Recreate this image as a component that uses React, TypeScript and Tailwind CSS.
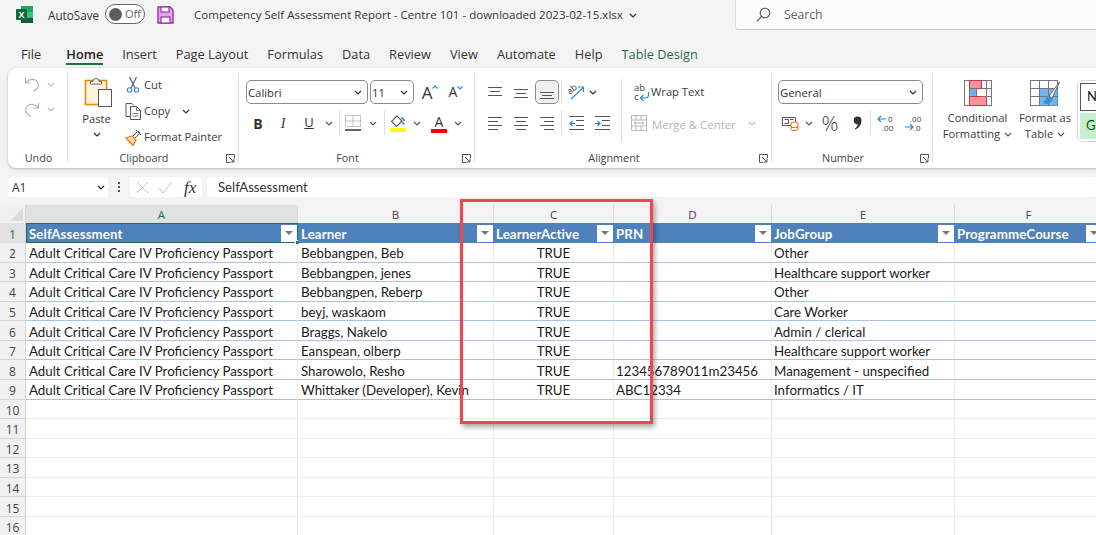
import type { ReactNode } from 'react'

const passport = 'Adult Critical Care IV Proficiency Passport'

const rows = [
    ['Bebbangpen, Beb', '', 'Other'],
    ['Bebbangpen, jenes', '', 'Healthcare support worker'],
    ['Bebbangpen, Reberp', '', 'Other'],
    ['beyj, waskaom', '', 'Care Worker'],
    ['Braggs, Nakelo', '', 'Admin / clerical'],
    ['Eanspean, olberp', '', 'Healthcare support worker'],
    ['Sharowolo, Resho', '123456789011m23456', 'Management - unspecified'],
    ['Whittaker (Developer), Kevin', 'ABC12334', 'Informatics / IT'],
]

const tabs = ['File', 'Home', 'Insert', 'Page Layout', 'Formulas', 'Data', 'Review', 'View', 'Automate', 'Help', 'Table Design']

const colWidths = ['w-[272px]', 'w-[196px]', 'w-[120px]', 'w-[158px]', 'w-[183px]', 'w-[148px]']
const colNames = ['A', 'B', 'C', 'D', 'E', 'F']
const headers = ['SelfAssessment', 'Learner', 'LearnerActive', 'PRN', 'JobGroup', 'ProgrammeCourse']
const headerPad = ['pl-[3px]', 'pl-[3px]', 'pl-[2px]', 'pl-[2px]', 'pl-[2px]', 'pl-[2px]']

const dataCell = 'flex shrink-0 items-center whitespace-nowrap border-b border-r border-b-[#a9c3e6] border-r-[#ececec] pt-[4px]'
const rowHead = "flex w-[26px] shrink-0 items-center justify-center border-r border-b border-[#d4d4d4] bg-[#f1f1f1] pt-[4px] font-['Open_Sans',sans-serif] text-[12px] text-[#444]"

function Chevron({ color = '#555' }: { color?: string }) {
    return (
        <svg width="8" height="5" viewBox="0 0 8 5" fill="none" stroke={color} strokeWidth="1.2" className="shrink-0">
            <path d="M1 1l3 3 3-3" />
        </svg>
    )
}

function Launcher() {
    return (
        <svg width="9" height="9" viewBox="0 0 9 9" fill="none" stroke="#555" strokeWidth="1" className="absolute right-[3px] top-[6px]">
            <path d="M8.5 4V.5H.5v8H4M3 3l5 5M8 4.5V8H4.5" />
        </svg>
    )
}

function Slot({ w, children }: { w: string; children?: ReactNode }) {
    return <div className={`flex h-6 shrink-0 items-center justify-center ${w}`}>{children}</div>
}

function Divider() {
    return <div className="h-6 w-px shrink-0 bg-[#dcdcdc]" />
}

function Separator() {
    return <div className="mt-[5px] h-[89px] w-px shrink-0 bg-[#e1e1e1]" />
}

function Group({ label, w, launcher = true, children }: { label: string; w: string; launcher?: boolean; children: ReactNode }) {
    return (
        <div className={`flex h-[100px] shrink-0 flex-col ${w}`}>
            <div className="h-[80px]">{children}</div>
            <div className={`relative flex h-[20px] items-center justify-center text-[10.800px] text-[#444] ${launcher ? 'pr-[18px]' : 'pl-[2px]'}`}>
                {label}
                {launcher && <Launcher />}
            </div>
        </div>
    )
}

function Combo({ w, text }: { w: string; text: string }) {
    return (
        <div className={`flex h-6 shrink-0 items-center justify-between rounded-[5px] border border-[#8a8a8a] bg-white pl-px pr-[5px] text-[11.300px] text-[#333] ${w}`}>
            <span className="pt-[2px]">{text}</span>
            <Chevron color="#333" />
        </div>
    )
}

function Lines({ bars }: { bars: [number, number, number][] }) {
    return (
        <svg width="16" height="16" viewBox="0 0 16 16" stroke="#555" strokeWidth="1">
            {bars.map(([x1, x2, y]) => (
                <line key={y} x1={x1} x2={x2} y1={y + 0.5} y2={y + 0.5} />
            ))}
        </svg>
    )
}

function ExcelLogo() {
    return (
        <svg width="17" height="17" viewBox="0 0 17 17">
            <rect x="5" y="0" width="12" height="6" fill="#21a366" />
            <rect x="5" y="6" width="12" height="5.5" fill="#107c41" />
            <rect x="5" y="11.5" width="12" height="5.5" fill="#185c37" />
            <rect x="11" y="6" width="6" height="5.5" fill="#33c481" />
            <rect x="0" y="3" width="11" height="11" rx="1" fill="#0f6b3a" />
            <text x="5.5" y="12" textAnchor="middle" fontSize="9" fontWeight="700" fill="#fff" fontFamily="'Liberation Sans'">X</text>
        </svg>
    )
}

function SaveIcon() {
    return (
        <svg width="17" height="18" viewBox="0 0 17 18" fill="#e5a5e8" stroke="#9c2fa8" strokeWidth="1.4">
            <path d="M1 1h12l3 3v13H1z" />
            <rect x="4" y="1" width="8" height="5" fill="#fff" strokeWidth="1.2" />
            <rect x="4" y="11" width="9" height="6" fill="#fff" strokeWidth="1.2" />
        </svg>
    )
}

function UndoIcon({ flip }: { flip?: boolean }) {
    return (
        <svg width="16" height="15" viewBox="0 0 16 15" fill="none" stroke="#b4b4b4" strokeWidth="1.2" className={flip ? '-scale-x-100' : ''}>
            <path d="M1.5 1v5h5M1.5 6C4 2.500 9 1.500 12 3.500s3 6 1 8L9.500 14.500" />
        </svg>
    )
}

function PasteIcon() {
    return (
        <svg width="30" height="30" viewBox="0 0 30 30">
            <rect x="3.500" y="3.500" width="21" height="24" fill="#fdf4e3" stroke="#ed8b00" strokeWidth="1.600" />
            <path d="M8.500 7V4.500h2.500a3 3 0 0 1 6 0h2.500V7z" fill="#fff" stroke="#666" strokeWidth="1" />
            <rect x="16.500" y="12.500" width="13" height="17" fill="#fff" stroke="#555" strokeWidth="1" />
        </svg>
    )
}

function CutIcon() {
    return (
        <svg width="14" height="16" viewBox="0 0 14 16" fill="none" strokeWidth="1.100">
            <path d="M3.500 0l5.500 11M10.500 0L5 11" stroke="#555" />
            <circle cx="3.500" cy="13" r="2.200" stroke="#2b88d8" />
            <circle cx="10.500" cy="13" r="2.200" stroke="#2b88d8" />
        </svg>
    )
}

function CopyIcon() {
    return (
        <svg width="17" height="17" viewBox="0 0 17 17" fill="#fff" stroke="#555" strokeWidth="1">
            <path d="M6 13.500H1V.5h6l2 2" fill="none" />
            <path d="M5.500 3.500h6l4 4v9h-10z" />
            <path d="M11.500 3.500v4h4M7.500 10.500h6M7.500 13h6" fill="none" strokeWidth=".8" />
        </svg>
    )
}

function PainterIcon() {
    return (
        <svg width="17" height="17" viewBox="0 0 17 17" fill="none">
            <path d="M1 9l6-2 4 4-3 5.500L1 9z" fill="#fbd9a8" stroke="#ed7d1b" strokeWidth="1.300" />
            <path d="M8 7l5-5 2 2-5 5" fill="#fff" stroke="#555" strokeWidth="1" />
            <path d="M11 1l5 5" stroke="#555" strokeWidth="1" />
        </svg>
    )
}

function GrowA({ size, up }: { size: string; up: boolean }) {
    return (
        <span className="relative inline-flex items-start">
            <span className={`leading-none text-[#333] ${size}`}>A</span>
            <svg width="6" height="4" viewBox="0 0 6 4" fill="none" stroke="#2b88d8" strokeWidth="1.100" className="mt-[1px]">
                <path d={up ? 'M.5 3.500L3 1l2.500 2.500' : 'M.5 .5L3 3 5.500 .5'} />
            </svg>
        </span>
    )
}

function BordersIcon() {
    return (
        <svg width="16" height="16" viewBox="0 0 16 16" fill="none" stroke="#888" strokeWidth="1" strokeDasharray="1 1">
            <path d="M.5 .5h15v11H.5zM8 .5v11M.5 6h15" />
            <path d="M0 15h16" stroke="#333" strokeWidth="1.400" strokeDasharray="none" />
        </svg>
    )
}

function FillIcon() {
    return (
        <svg width="16" height="17" viewBox="0 0 16 17">
            <path d="M7 1L1.500 6.500 6.500 11.500 12 6z" fill="#fff" stroke="#555" strokeWidth="1.100" />
            <path d="M11 3a3 3 0 0 1 3 3" fill="none" stroke="#2b88d8" strokeWidth="1.600" />
            <path d="M12 6l2.500 2v1.500h-2z" fill="#2b88d8" />
            <rect x="0" y="13" width="16" height="4" fill="#ffff00" />
        </svg>
    )
}

function OrientationIcon() {
    return (
        <svg width="18" height="18" viewBox="0 0 18 18" fill="none" className="overflow-visible">
            <text x="1" y="9" fontSize="9" fill="#444" transform="rotate(-38 6 8)" fontFamily="'Open Sans'">ab</text>
            <path d="M4 16L16 5M11 4h5.500v5" stroke="#2b88d8" strokeWidth="1.200" />
        </svg>
    )
}

function IndentIcon({ dir }: { dir: 'in' | 'out' }) {
    const arrow = dir === 'out' ? 'M6 7.500H1M3.500 5L1 7.500 3.500 10' : 'M0 7.500h5M2.500 5L5 7.500 2.500 10'
    return (
        <svg width="15" height="14" viewBox="0 0 15 14" fill="none">
            <path d="M0 .5h15M7 4.500h8M7 9.500h8M0 13.500h15" stroke="#555" strokeWidth="1" />
            <path d={arrow} stroke="#1f7fd4" strokeWidth="1.100" />
        </svg>
    )
}

function WrapIcon() {
    return (
        <svg width="17" height="20" viewBox="0 0 17 20" fill="none" className="overflow-visible">
            <text x="1" y="8.500" fontSize="9.500" fill="#444" fontFamily="'Open Sans'">ab</text>
            <text x="1" y="18" fontSize="9.500" fill="#444" fontFamily="'Open Sans'">c</text>
            <path d="M15.500 10v3a3 3 0 0 1-3 3H8M10.500 13L7.500 16l3 3" stroke="#2b88d8" strokeWidth="1.200" />
        </svg>
    )
}

function MergeIcon() {
    return (
        <svg width="16" height="16" viewBox="0 0 16 16" fill="none" stroke="#b8b8b8" strokeWidth="1">
            <path d="M.5 .5h15v15H.5zM.5 5h15M.5 11h15M5 .5V5M10 .5V5M5 11v4.500M10 11v4.500" />
            <path d="M3 8h10M5 6.500L3 8l2 1.500M11 6.500L13 8l-2 1.500" />
        </svg>
    )
}

function AccountingIcon() {
    return (
        <svg width="17" height="16" viewBox="0 0 17 16" fill="none">
            <path d="M.5 2.500h13v8H.5z" fill="#fff" stroke="#555" strokeWidth="1" />
            <path d="M2.500 4.500h4v4h-4M8 4.500h3.500" stroke="#555" strokeWidth="1" />
            <ellipse cx="12.500" cy="8.500" rx="3.500" ry="1.500" fill="#fff" stroke="#ed7d1b" strokeWidth="1.100" />
            <path d="M9 8.500v5.500c0 2 7 2 7 0V8.500M9 11c0 2 7 2 7 0" fill="#fff" stroke="#ed7d1b" strokeWidth="1.100" />
        </svg>
    )
}

function CommaIcon() {
    return (
        <svg width="9" height="14" viewBox="0 0 9 14" fill="#333">
            <path d="M4.500 .5a4 4 0 0 1 4 4c0 4-2.500 7.500-6 9l-.8-1c1.800-1.200 2.900-2.800 3.100-4.100A3.900 3.900 0 1 1 4.500 .5z" />
        </svg>
    )
}

function DecimalIcon({ grow }: { grow: boolean }) {
    return (
        <svg width="18" height="18" viewBox="0 0 18 18" fill="none">
            <text x={grow ? 11 : 6} y="8" fontSize="8" fill="#444" fontFamily="'Open Sans'">{grow ? '0' : '.00'}</text>
            <text x={grow ? 5 : 10} y="17" fontSize="8" fill="#444" fontFamily="'Open Sans'">{grow ? '.00' : '.0'}</text>
            <path d={grow ? 'M9 5H1M4 2L1 5l3 3' : 'M1 13h8M6 10l3 3-3 3'} stroke="#2b88d8" strokeWidth="1.200" />
        </svg>
    )
}

function ConditionalIcon() {
    return (
        <svg width="28" height="26" viewBox="0 0 28 26" stroke="#777" strokeWidth="1">
            <rect x=".5" y=".5" width="27" height="25" fill="#fff" />
            <rect x="5.500" y=".5" width="12" height="8" fill="#f8929c" stroke="#e0303c" />
            <rect x="5.500" y="8.500" width="7" height="8" fill="#6fb1e8" stroke="#777" />
            <rect x="5.500" y="16.500" width="17" height="9" fill="#f8929c" stroke="#e0303c" />
            <path d="M18 8.500h9.500M18 16.500h9.500M22.500 .5v8M22.500 8.500v8" fill="none" />
        </svg>
    )
}

function TableIcon() {
    return (
        <svg width="31" height="27" viewBox="0 0 31 27" stroke="#777" strokeWidth="1">
            <rect x=".5" y=".5" width="27" height="25" fill="#fff" />
            <rect x="9.500" y="8.500" width="18" height="17" fill="#74b3ec" stroke="#4a90d9" />
            <path d="M.5 8.500h27M.5 16.500h27M9.500 .5v25M18.500 .5v25" fill="none" />
            <path d="M29.500 2L19 16l3 2.500z" fill="#fff" stroke="#666" />
            <path d="M19 16c-3 1-2 4-6 6 4 3 9 1 9-3.500z" fill="#3f8fd6" stroke="#3f8fd6" />
        </svg>
    )
}

function FilterButton() {
    return (
        <div className="flex h-[17px] w-4 shrink-0 items-center justify-center bg-white">
            <div className="h-0 w-0 border-x-[4px] border-t-[4px] border-x-transparent border-t-[#777]" />
        </div>
    )
}

function TitleBar() {
    return (
        <div className="flex h-[40px] items-start">
            <div className="ml-4 mt-[6px]"><ExcelLogo /></div>
            <span className="ml-[15px] mt-[5px] text-[11.700px] leading-5">AutoSave</span>
            <div className="ml-[6px] mt-[4px] flex h-[20px] w-[40px] items-center rounded-full border-[1.500px] border-[#666] bg-white pl-[3px]">
                <div className="h-[13px] w-[13px] rounded-full bg-[#5c5c5c]" />
                <span className="ml-[3px] text-[11px] text-[#666]">Off</span>
            </div>
            <div className="ml-[12px] mt-[6px]"><SaveIcon /></div>
            <span className="ml-[20px] mt-[5px] text-[11.550px] leading-5">Competency Self Assessment Report - Centre 101 - downloaded 2023-02-15.xlsx</span>
            <div className="ml-[6px] mt-[13px]"><Chevron color="#333" /></div>
            <div className="absolute left-[735px] top-0 flex h-[30px] w-[380px] items-center rounded-b-[4px] border border-t-0 border-[#dedede] border-b-[#c8c8c8] bg-[#fbfbfb] pl-[20px] text-[12.200px] text-[#666]">
                <svg width="15" height="15" viewBox="0 0 15 15" fill="none" stroke="#555" strokeWidth="1.100">
                    <circle cx="9" cy="6" r="4.800" />
                    <path d="M5.500 9.500L.7 14.300" />
                </svg>
                <span className="ml-[13px] pt-[2px]">Search</span>
            </div>
        </div>
    )
}

function TabBar() {
    return (
        <div className="flex h-[28px] gap-[19px] pl-[21px] pt-[5px] text-[12.800px]">
            {tabs.map((tab) => (
                <div key={tab} className={`flex flex-col ${tab === 'Home' ? 'ml-[6px]' : ''}`}>
                    <span className={`leading-[18px] ${tab === 'Home' ? 'font-semibold text-[#222]' : ''} ${tab === 'Table Design' ? 'text-[#1e7145]' : ''}`}>{tab}</span>
                    <div className={`h-[2px] ${tab === 'Home' ? 'bg-[#1e7145]' : ''}`} />
                </div>
            ))}
        </div>
    )
}

function Ribbon() {
    return (
        <div className="ml-2 flex h-[100px] w-[1110px] overflow-hidden rounded-lg bg-white text-[11.200px] text-[#3a3a3a] shadow-[0_1px_3px_rgba(0,0,0,0.25)]">
            <Group label="Undo" w="w-[59px]" launcher={false}>
                <div className="flex flex-col pl-[16px] pt-[3px]">
                    <div className="flex h-[26px] items-center gap-[7px]"><UndoIcon /><Chevron color="#bdbdbd" /></div>
                    <div className="flex h-[24px] items-center gap-[7px]"><UndoIcon flip /><Chevron color="#bdbdbd" /></div>
                </div>
            </Group>
            <Separator />

            <Group label="Clipboard" w="w-[170px]">
                <div className="flex">
                    <div className="flex w-[55px] flex-col items-center pl-[2px] pt-[9px]">
                        <PasteIcon />
                        <span className="mt-[3px] leading-[18px]">Paste</span>
                        <div className="mt-[4px]"><Chevron color="#333" /></div>
                    </div>
                    <div className="flex flex-col pt-1">
                        <div className="flex h-[26px] items-center"><div className="flex w-[20px] justify-center"><CutIcon /></div><span className="ml-[1px]">Cut</span></div>
                        <div className="flex h-[26px] items-center"><div className="flex w-[20px] justify-center"><CopyIcon /></div><span className="ml-[1px]">Copy</span><div className="ml-[12px]"><Chevron color="#333" /></div></div>
                        <div className="flex h-[26px] items-center"><div className="flex w-[20px] justify-center"><PainterIcon /></div><span className="ml-[1px] whitespace-nowrap">Format Painter</span></div>
                    </div>
                </div>
            </Group>
            <Separator />

            <Group label="Font" w="w-[235px]">
                <div className="flex flex-col gap-[7px] pl-[7px] pt-[12px]">
                    <div className="flex items-center">
                        <Combo w="w-[122px]" text="Calibri" />
                        <div className="w-[2px]" />
                        <Combo w="w-[44px]" text="11" />
                        <Slot w="w-[28px] ml-[2px]"><GrowA size="text-[17px]" up /></Slot>
                        <Slot w="w-[24px]"><GrowA size="text-[14px]" up={false} /></Slot>
                    </div>
                    <div className="flex items-center text-[#333]">
                        <Slot w="w-[24px]"><span className="text-[14px] font-bold">B</span></Slot>
                        <Slot w="w-[26px]"><span className="font-['Liberation_Serif',serif] text-[14px] italic">I</span></Slot>
                        <Slot w="w-[26px]"><span className="text-[13px] underline">U</span></Slot>
                        <Slot w="w-[14px]"><Chevron /></Slot>
                        <Slot w="w-[6px]"><Divider /></Slot>
                        <Slot w="w-[22px]"><BordersIcon /></Slot>
                        <Slot w="w-[18px]"><Chevron /></Slot>
                        <Slot w="w-[4px]"><Divider /></Slot>
                        <Slot w="w-[24px]"><FillIcon /></Slot>
                        <Slot w="w-[14px]"><Chevron /></Slot>
                        <Slot w="w-[30px]">
                            <div className="flex flex-col items-center">
                                <span className="text-[14px] leading-[15px]">A</span>
                                <div className="h-1 w-4 bg-[#ff0000]" />
                            </div>
                        </Slot>
                        <Slot w="w-[8px]"><Chevron /></Slot>
                    </div>
                </div>
            </Group>
            <Separator />

            <Group label="Alignment" w="w-[296px]">
                <div className="flex">
                    <div className="flex w-[146px] shrink-0 flex-col gap-[7px] pl-2 pt-[12px]">
                        <div className="flex items-center gap-[2px]">
                            <Slot w="w-[24px]"><Lines bars={[[1, 15, 3], [3, 13, 7], [1, 15, 11]]} /></Slot>
                            <Slot w="w-[24px]"><Lines bars={[[1, 15, 5], [3, 13, 9], [1, 15, 13]]} /></Slot>
                            <div className="flex h-6 w-6 items-center justify-center rounded-[5px] border border-[#8a8a8a] bg-[#f0f0f0]"><Lines bars={[[1, 15, 8], [3, 13, 11], [1, 15, 14]]} /></div>
                            <Divider />
                            <Slot w="w-[24px]"><OrientationIcon /></Slot>
                            <Slot w="w-[10px] -ml-[2px]"><Chevron color="#333" /></Slot>
                        </div>
                        <div className="flex items-center gap-[2px]">
                            <Slot w="w-[24px]"><Lines bars={[[1, 15, 2], [1, 11, 6], [1, 15, 10], [1, 11, 14]]} /></Slot>
                            <Slot w="w-[24px]"><Lines bars={[[1, 15, 2], [3, 13, 6], [1, 15, 10], [3, 13, 14]]} /></Slot>
                            <Slot w="w-[24px]"><Lines bars={[[1, 15, 2], [5, 15, 6], [1, 15, 10], [5, 15, 14]]} /></Slot>
                            <Divider />
                            <Slot w="w-[24px]"><IndentIcon dir="out" /></Slot>
                            <Slot w="w-[24px]"><IndentIcon dir="in" /></Slot>
                        </div>
                    </div>
                    <div className="mt-[11px] h-[63px] w-px shrink-0 bg-[#dcdcdc]" />
                    <div className="flex flex-col gap-[7px] pt-[12px]">
                        <div className="flex h-6 items-center pl-[11px]">
                            <WrapIcon />
                            <span className="ml-[1px] whitespace-nowrap">Wrap Text</span>
                        </div>
                        <div className="flex h-6 items-center pl-[9px] text-[#b4b4b4]">
                            <MergeIcon />
                            <span className="ml-[5px] whitespace-nowrap pt-[4px] text-[11.400px]">Merge &amp; Center</span>
                            <div className="ml-[12px]"><Chevron color="#bdbdbd" /></div>
                        </div>
                    </div>
                </div>
            </Group>
            <Separator />

            <Group label="Number" w="w-[160px]">
                <div className="flex flex-col gap-[7px] pl-[6px] pt-[12px]">
                    <Combo w="w-[145px]" text="General" />
                    <div className="flex items-center">
                        <Slot w="w-[24px]"><AccountingIcon /></Slot>
                        <Slot w="w-[14px]"><Chevron /></Slot>
                        <Slot w="w-[28px]"><span className="text-[21px] font-light leading-none">%</span></Slot>
                        <Slot w="w-[26px]"><CommaIcon /></Slot>
                        <Divider />
                        <Slot w="w-[26px] ml-[2px]"><DecimalIcon grow /></Slot>
                        <Slot w="w-[28px]"><DecimalIcon grow={false} /></Slot>
                    </div>
                </div>
            </Group>
            <Separator />

            <div className="flex h-[100px] shrink-0 pt-[12px]">
                <div className="flex w-[89px] flex-col items-center">
                    <ConditionalIcon />
                    <span className="mt-[4px] leading-4">Conditional</span>
                    <span className="flex items-center gap-[4px] leading-4">Formatting <Chevron /></span>
                </div>
                <div className="ml-px flex w-[44px] flex-col items-center">
                    <TableIcon />
                    <span className="mt-[3px] whitespace-nowrap leading-4">Format as</span>
                    <span className="flex items-center gap-[4px] leading-4">Table <Chevron /></span>
                </div>
                <div className="ml-[10px] h-[62px] w-[60px] rounded-[5px] border border-[#d5d5d5] p-[2px]">
                    <div className="flex h-[28px] items-center border border-[#555] pl-[6px] font-['Lato',sans-serif] text-[13px] text-[#111]">Normal</div>
                    <div className="mt-[2px] flex h-[26px] items-center bg-[#c6efce] pl-[6px] font-['Lato',sans-serif] text-[13px] text-[#006100]">Good</div>
                </div>
            </div>
        </div>
    )
}

function FormulaBar() {
    return (
        <div className="ml-2 mt-[9px] flex h-[20px]">
            <div className="flex w-[100px] items-center justify-between rounded-[3px] bg-white pl-[4px] pr-[3px] text-[12px]">
                <span className="pt-[2px]">A1</span>
                <Chevron color="#222" />
            </div>
            <div className="flex w-[22px] flex-col items-center justify-center gap-[2px]">
                <div className="h-[2px] w-[2px] bg-[#555]" />
                <div className="h-[2px] w-[2px] bg-[#555]" />
                <div className="h-[2px] w-[2px] bg-[#555]" />
            </div>
            <div className="flex w-[72px] items-center rounded-[3px] bg-white pl-[6px]">
                <svg width="13" height="13" viewBox="0 0 13 13" stroke="#c4c4c4" strokeWidth="1" fill="none">
                    <path d="M1 1l11 11M12 1L1 12" />
                </svg>
                <svg width="16" height="13" viewBox="0 0 16 13" stroke="#c4c4c4" strokeWidth="1" fill="none" className="ml-[8px]">
                    <path d="M2 7l4 5L15 1" />
                </svg>
                <span className="ml-[11px] font-['Liberation_Serif',serif] text-[17px] italic leading-none text-[#333]">fx</span>
            </div>
            <div className="ml-[5px] flex flex-1 items-center rounded-[3px] bg-white pl-[11px] pt-[2px] font-['Lato',sans-serif] text-[13.200px] text-[#333]">SelfAssessment</div>
        </div>
    )
}

function Sheet() {
    return (
        <div className="mt-[8px] flex flex-col bg-white font-['Lato',sans-serif] text-[13.300px] text-[#1a1a1a]">
            {/* column letters */}
            <div className="flex h-[18px] font-['Open_Sans',sans-serif] text-[11.500px] text-[#444]">
                <div className="flex w-[26px] shrink-0 items-end justify-end border-r border-[#d4d4d4] bg-[#f0f0f0] pb-[2px] pr-[2px]">
                    <div className="h-0 w-0 border-b-[13px] border-l-[13px] border-b-[#dcdcdc] border-l-transparent" />
                </div>
                {colNames.map((name, i) => (
                    <div key={name} className={`flex shrink-0 items-center justify-center border-r border-[#dcdcdc] pt-[2px] ${colWidths[i]} ${i === 0 ? 'bg-[#e1e1e1] text-[#217346]' : 'bg-[#f3f3f3]'}`}>
                        {name}
                    </div>
                ))}
            </div>

            {/* table header */}
            <div className="flex h-[20px]">
                <div className="flex w-[26px] shrink-0 items-center justify-center border-r border-[#d4d4d4] bg-[#e1e1e1] pt-[3px] font-['Open_Sans',sans-serif] text-[12px] text-[#217346]">1</div>
                {headers.map((header, i) => (
                    <div key={header} className={`relative flex shrink-0 items-center justify-between bg-[#4f81bd] pr-px font-bold tracking-[0.1px] text-white ${colWidths[i]} ${headerPad[i]}`}>
                        <span className="pt-[3px]">{header}</span>
                        <FilterButton />
                        {i === 0 && (
                            <div className="absolute inset-0 border border-[#217346]">
                                <div className="absolute -bottom-[3px] -right-[3px] h-[5px] w-[5px] border border-white bg-[#217346]" />
                            </div>
                        )}
                    </div>
                ))}
            </div>

            {/* data rows */}
            {rows.map((row, r) => (
                <div key={row[0]} className="flex h-[19.570px]">
                    <div className={rowHead}>{r + 2}</div>
                    <div className={`${dataCell} pl-[3px] ${colWidths[0]}`}>{passport}</div>
                    <div className={`${dataCell} pl-[3px] ${colWidths[1]}`}>{row[0]}</div>
                    <div className={`${dataCell} justify-center ${colWidths[2]}`}>TRUE</div>
                    <div className={`${dataCell} pl-[2px] ${colWidths[3]}`}>{row[1]}</div>
                    <div className={`${dataCell} pl-[2px] ${colWidths[4]}`}>{row[2]}</div>
                    <div className={`${dataCell} ${colWidths[5]}`} />
                </div>
            ))}

            {/* empty rows */}
            {[10, 11, 12, 13, 14, 15, 16].map((n) => (
                <div key={n} className="flex h-[19.570px]">
                    <div className={rowHead}>{n}</div>
                    {colWidths.map((w) => (
                        <div key={w} className={`shrink-0 border-b border-r border-[#ececec] ${w}`} />
                    ))}
                </div>
            ))}
        </div>
    )
}

export default function App() {
    return (
        <div className="relative h-[535px] w-[1096px] overflow-hidden bg-[#f3f3f3] font-['Open_Sans',sans-serif] text-[#333]">
            <TitleBar />
            <TabBar />
            <Ribbon />
            <FormulaBar />
            <Sheet />
            {/* red highlight drawn over the sheet */}
            <div className="absolute left-[460px] top-[199px] h-[225px] w-[193px] border-[3px] border-[#f2464e] shadow-[2px_3px_5px_rgba(0,0,0,0.35)]" />
        </div>
    )
}
